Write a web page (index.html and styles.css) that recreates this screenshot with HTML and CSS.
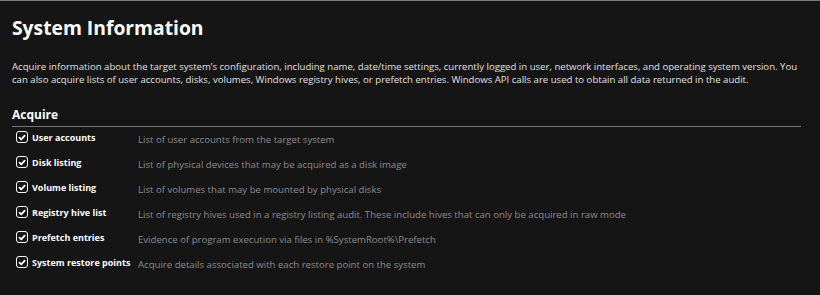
FILE: index.html
```html
<!DOCTYPE html>
<html lang="en">
<head>
  <meta charset="UTF-8">
  <title>System Information</title>
  <link rel="stylesheet" href="styles.css">
</head>
<body>

<div class="panel">
  <h1>System Information</h1>
  <p class="intro">Acquire information about the target system’s configuration, including name, date/time settings, currently logged in user, network interfaces, and operating system version. You can also acquire lists of user accounts, disks, volumes, Windows registry hives, or prefetch entries. Windows API calls are used to obtain all data returned in the audit.</p>

  <h2>Acquire</h2>

  <!-- Options -->
  <div class="options">
    <label class="option">
      <span class="check"><svg viewBox="0 0 12 12"><path d="M3 6.2 L5.1 8.3 L9.2 3.8"/></svg></span>
      <span class="name">User accounts</span>
      <span class="desc">List of user accounts from the target system</span>
    </label>
    <label class="option">
      <span class="check"><svg viewBox="0 0 12 12"><path d="M3 6.2 L5.1 8.3 L9.2 3.8"/></svg></span>
      <span class="name">Disk listing</span>
      <span class="desc">List of physical devices that may be acquired as a disk image</span>
    </label>
    <label class="option">
      <span class="check"><svg viewBox="0 0 12 12"><path d="M3 6.2 L5.1 8.3 L9.2 3.8"/></svg></span>
      <span class="name">Volume listing</span>
      <span class="desc">List of volumes that may be mounted by physical disks</span>
    </label>
    <label class="option">
      <span class="check"><svg viewBox="0 0 12 12"><path d="M3 6.2 L5.1 8.3 L9.2 3.8"/></svg></span>
      <span class="name">Registry hive list</span>
      <span class="desc">List of registry hives used in a registry listing audit. These include hives that can only be acquired in raw mode</span>
    </label>
    <label class="option">
      <span class="check"><svg viewBox="0 0 12 12"><path d="M3 6.2 L5.1 8.3 L9.2 3.8"/></svg></span>
      <span class="name">Prefetch entries</span>
      <span class="desc">Evidence of program execution via files in %SystemRoot%\Prefetch</span>
    </label>
    <label class="option">
      <span class="check"><svg viewBox="0 0 12 12"><path d="M3 6.2 L5.1 8.3 L9.2 3.8"/></svg></span>
      <span class="name">System restore points</span>
      <span class="desc">Acquire details associated with each restore point on the system</span>
    </label>
  </div>
</div>

</body>
</html>
```

FILE: styles.css
```css
* {
  box-sizing: border-box;
}
html, body {
  height: 100%;
}
body {
  font-family: "Open Sans", Arial, sans-serif;
  margin: 0;
  padding: 0;
  background: #151515;
  color: #e6e6e6;
  border-top: 1px solid #7a7a7a;
}
.panel {
  padding: 0 19px 0 12px;
}
h1 {
  font-size: 19.3px;
  font-weight: 700;
  color: #fff;
  margin: 0;
  padding-top: 12px;
  line-height: 30px;
}
.intro {
  font-size: 9.6px;
  line-height: 13.3px;
  margin: 17px 0 0;
  color: #e0e0e0;
}
h2 {
  font-size: 12px;
  font-weight: 700;
  color: #fff;
  margin: 20px 0 0;
  line-height: 16px;
  padding-bottom: 3px;
  border-bottom: 1px solid #777;
}
.options {
  margin-top: -2px;
}
.option {
  display: flex;
  align-items: center;
  height: 25px;
}
.check {
  flex: none;
  width: 12px;
  height: 12px;
  margin-left: 4px;
  border: 1.5px solid #fff;
  border-radius: 3px;
  display: flex;
  align-items: center;
  justify-content: center;
}
.check svg {
  width: 11px;
  height: 11px;
  fill: none;
  stroke: #fff;
  stroke-width: 2.2;
  stroke-linecap: round;
  stroke-linejoin: round;
}
.name {
  flex: none;
  width: 110px;
  padding-left: 4px;
  font-size: 9px;
  font-weight: 700;
  color: #fff;
  white-space: nowrap;
}
.desc {
  font-size: 9.6px;
  color: #8c8c8c;
  padding-top: 4px;
  white-space: nowrap;
}
```
